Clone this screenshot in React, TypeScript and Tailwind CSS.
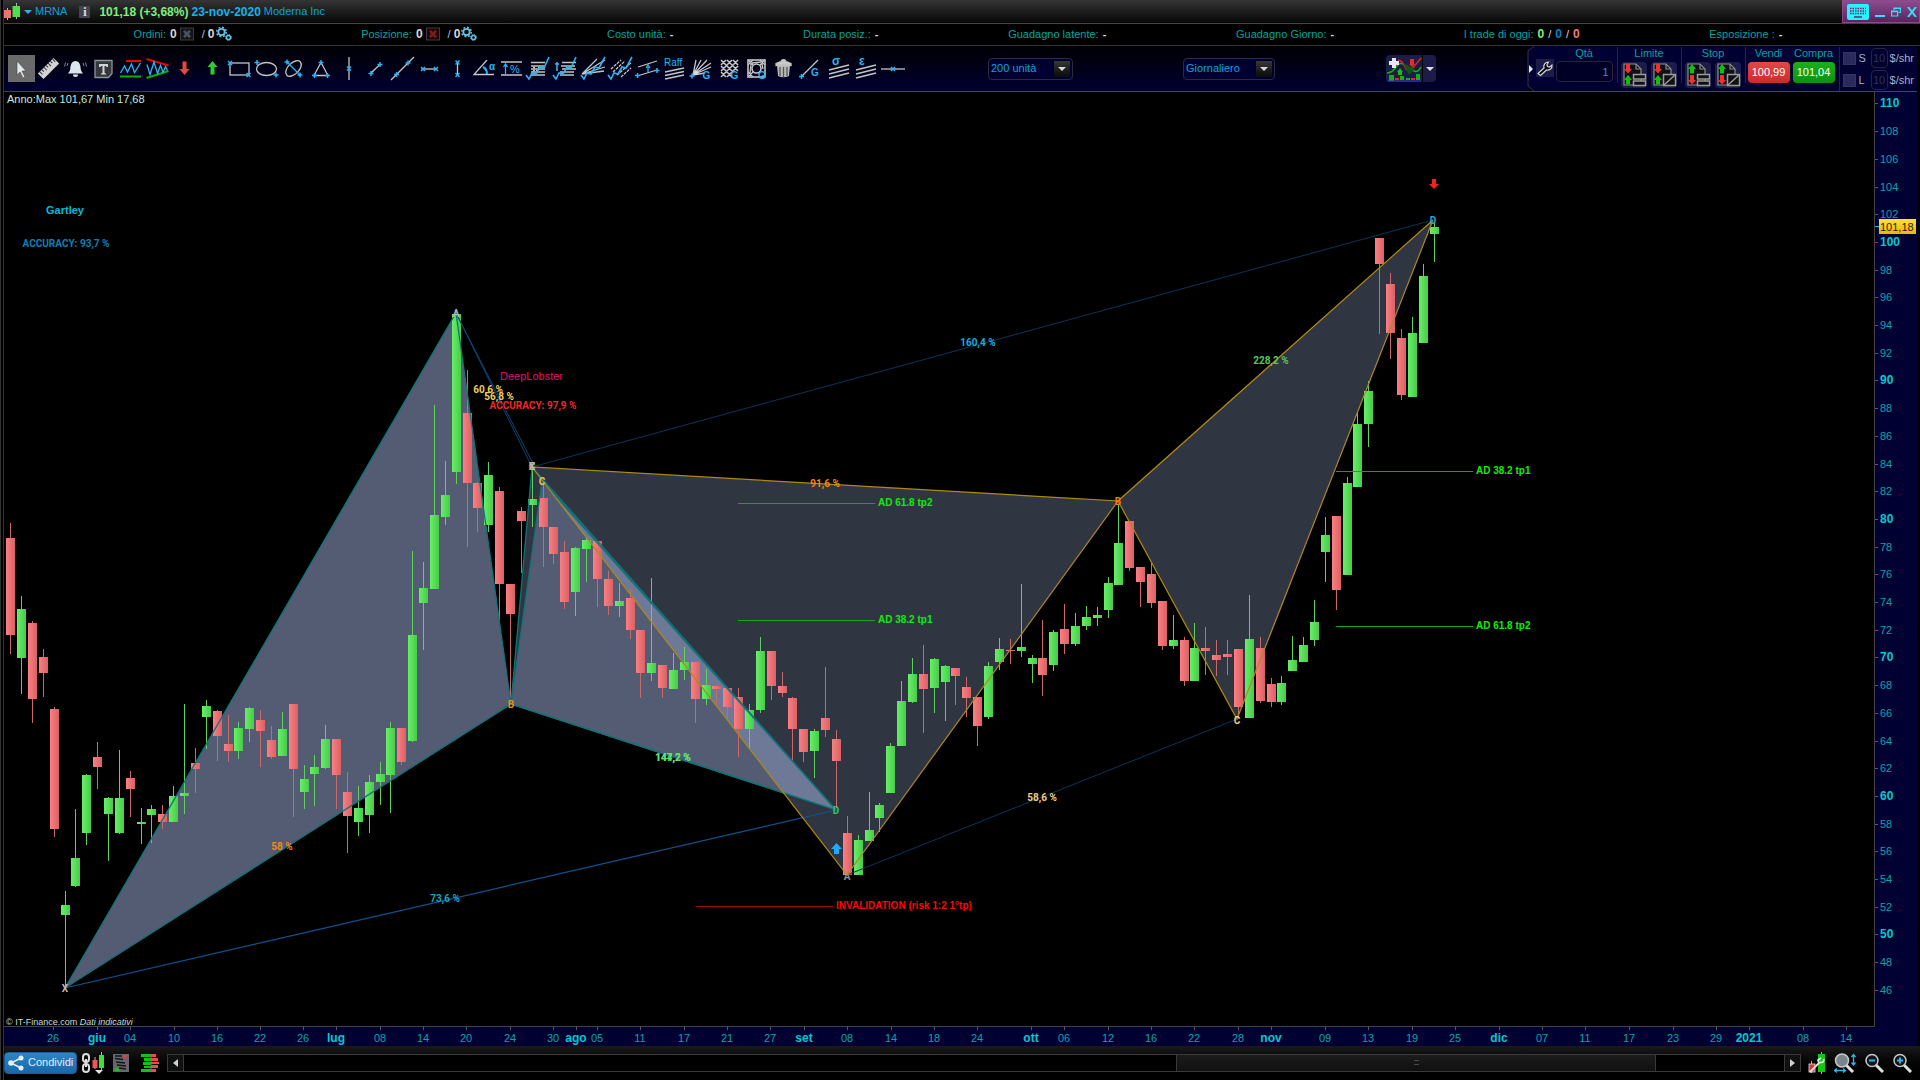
import React from "react";

type Candle = [number, number, number, number, number];

// high, body top, body bottom, low, 1 = up / 0 = down
const candles: Candle[] = [
  [523, 538, 635, 654, 0], [596, 609, 658, 694, 1], [621, 623, 699, 723, 0], [649, 657, 673, 697, 0],
  [707, 709, 829, 837, 0], [891, 905, 915, 987, 1], [809, 858, 886, 887, 1], [774, 775, 833, 845, 1],
  [742, 757, 767, 789, 0], [797, 798, 814, 861, 1], [750, 798, 833, 834, 1], [771, 778, 789, 817, 0],
  [808, 822, 824, 844, 1], [805, 809, 815, 843, 1], [805, 814, 822, 829, 0], [786, 796, 822, 822, 1],
  [704, 793, 796, 814, 1], [748, 763, 769, 793, 0], [700, 706, 717, 749, 1], [710, 711, 736, 761, 0],
  [715, 744, 751, 762, 0], [722, 728, 751, 759, 1], [707, 708, 729, 742, 1], [710, 720, 731, 767, 0],
  [726, 740, 757, 759, 0], [712, 729, 756, 756, 1], [704, 704, 769, 817, 0], [765, 779, 792, 809, 1],
  [755, 767, 774, 806, 1], [725, 739, 768, 769, 1], [739, 739, 775, 809, 0], [772, 792, 816, 853, 0],
  [786, 808, 822, 836, 1], [775, 782, 815, 833, 1], [762, 774, 782, 805, 1], [722, 728, 775, 813, 1],
  [728, 728, 762, 765, 0], [551, 635, 741, 742, 1], [562, 588, 603, 650, 1], [405, 515, 589, 589, 1],
  [461, 495, 517, 525, 1], [312, 314, 472, 484, 1], [370, 413, 483, 547, 0], [482, 483, 508, 532, 0],
  [462, 475, 525, 532, 1], [487, 491, 584, 620, 0], [584, 584, 614, 698, 0], [507, 511, 521, 573, 0],
  [468, 499, 505, 527, 1], [483, 498, 527, 567, 0], [527, 527, 554, 564, 0], [541, 552, 602, 609, 0],
  [547, 548, 592, 616, 1], [538, 540, 549, 582, 1], [541, 541, 579, 607, 0], [571, 579, 606, 615, 0],
  [583, 601, 606, 617, 1], [589, 598, 630, 639, 0], [630, 630, 673, 698, 0], [578, 663, 673, 681, 1],
  [665, 665, 688, 698, 0], [653, 670, 689, 689, 1], [647, 662, 670, 680, 1], [662, 662, 699, 723, 0],
  [669, 685, 699, 705, 1], [686, 686, 689, 705, 0], [687, 688, 707, 719, 0], [688, 697, 729, 757, 0],
  [704, 710, 729, 748, 1], [637, 651, 710, 713, 1], [651, 651, 686, 700, 0], [672, 686, 693, 697, 0],
  [697, 698, 729, 761, 0], [729, 729, 752, 762, 0], [729, 731, 751, 778, 1], [667, 718, 730, 737, 0],
  [730, 739, 761, 808, 0], [816, 833, 875, 875, 0], [835, 840, 875, 875, 1], [792, 830, 841, 841, 1],
  [803, 805, 818, 832, 1], [743, 746, 793, 793, 1], [681, 701, 746, 746, 1], [658, 674, 702, 703, 1],
  [645, 674, 689, 733, 0], [658, 659, 688, 713, 1], [665, 666, 682, 721, 1], [668, 668, 676, 705, 0],
  [677, 687, 698, 717, 0], [697, 697, 726, 746, 0], [662, 666, 717, 719, 1], [638, 649, 662, 670, 1],
  [639, 650, 651, 664, 0], [584, 647, 651, 657, 1], [655, 658, 664, 683, 1], [620, 658, 675, 696, 0],
  [630, 632, 665, 671, 1], [604, 629, 644, 654, 0], [613, 626, 644, 646, 1], [606, 617, 626, 630, 1],
  [607, 615, 618, 626, 1], [577, 583, 610, 618, 1], [505, 543, 585, 585, 1], [521, 521, 568, 571, 0],
  [567, 567, 582, 607, 0], [562, 574, 603, 608, 0], [601, 601, 646, 650, 0], [615, 640, 646, 649, 1],
  [637, 640, 681, 686, 0], [623, 648, 681, 681, 1], [627, 648, 651, 675, 0], [640, 655, 660, 676, 0],
  [640, 654, 657, 675, 0], [649, 649, 707, 718, 0], [595, 639, 718, 718, 1], [637, 648, 701, 703, 0],
  [678, 684, 702, 707, 0], [676, 683, 702, 705, 1], [636, 660, 671, 671, 1], [637, 645, 662, 662, 1],
  [600, 622, 640, 646, 1], [517, 535, 552, 582, 1], [516, 516, 590, 610, 0], [477, 483, 575, 575, 1],
  [412, 424, 487, 487, 1], [381, 391, 424, 447, 1], [238, 238, 264, 334, 0], [273, 284, 333, 359, 0],
  [329, 338, 395, 400, 0], [317, 333, 397, 397, 1], [264, 276, 343, 343, 1], [223, 227, 234, 262, 1],
];

const days: [number, string][] = [
  [53, "26"], [97, "giu"], [130, "04"], [174, "10"], [217, "16"], [260, "22"], [303, "26"], [336, "lug"],
  [380, "08"], [423, "14"], [466, "20"], [510, "24"], [553, "30"], [576, "ago"], [597, "05"], [640, "11"],
  [684, "17"], [727, "21"], [770, "27"], [804, "set"], [847, "08"], [891, "14"], [934, "18"], [977, "24"],
  [1031, "ott"], [1064, "06"], [1108, "12"], [1151, "16"], [1194, "22"], [1238, "28"], [1271, "nov"],
  [1325, "09"], [1368, "13"], [1412, "19"], [1455, "25"], [1499, "dic"], [1542, "07"], [1585, "11"],
  [1629, "17"], [1673, "23"], [1716, "29"], [1749, "2021"], [1803, "08"], [1846, "14"],
];

const prices = Array.from({ length: 33 }, (_, i) => 110 - i * 2);

const priceY = (p: number) => Math.round(103.4 + (110 - p) * 13.85);

const CY = "#2bb5ee";
const GR = "#c4c4c4";

// small x / + handles used by the drawing tools
const Cross = ({ x, y }: { x: number; y: number }) => (
  <path d={`M${x - 2} ${y - 2}l4 4m0-4l-4 4`} stroke={CY} strokeWidth="1.5" />
);

const Plus = ({ x, y }: { x: number; y: number }) => (
  <path d={`M${x - 2.5} ${y}h5m-2.5-2.5v5`} stroke={CY} strokeWidth="1.5" />
);

const Glyph = ({ x, y, size, children }: { x: number; y: number; size: number; children: string }) => (
  <text x={x} y={y} fontSize={size} fontWeight="700" fill={CY} stroke="none">
    {children}
  </text>
);

const tools: { name: string; icon: React.ReactNode }[] = [
  {
    name: "Selezione",
    icon: <path d="M9 6v14l3-3 3 6 2-1-3-6h4z" fill="#e4e8ea" stroke="#444" strokeWidth=".6" />,
  },
  {
    name: "Righello",
    icon: (
      <g transform="rotate(-45 13.5 13.5)">
        <rect x="2.5" y="9.5" width="22" height="8" fill="#d4d4d4" stroke="none" />
        <path d="M5 9.5v4M8 9.5v3M11 9.5v4M14 9.5v3M17 9.5v4M20 9.5v3M23 9.5v4" stroke="#333" strokeWidth="1" />
      </g>
    ),
  },
  {
    name: "Allarme",
    icon: (
      <>
        <path d="M13.5 6c-4 0-5 4-5.2 8-.2 2-1.5 3-2.3 4.5h15c-.8-1.5-2.1-2.5-2.3-4.5-.2-4-1.2-8-5.2-8z" fill="#dbe5ec" stroke="none" />
        <path d="M11 19.5a2.5 2.5 0 005 0z" fill="#dbe5ec" stroke="none" />
        <path d="M6 8l-1 3M3.5 7.5l-1 4M21 8l1 3M23.5 7.5l1 4" stroke="#9aa" strokeWidth=".8" />
      </>
    ),
  },
  {
    name: "Testo",
    icon: (
      <>
        <path d="M5 5.5h17v13l-3.5 4H5z" fill="#34383a" stroke="#8d9496" />
        <path d="M9 9h9v3h-1.5l-.5-1h-1.5v7l1.5.5v1h-5v-1l1.5-.5v-7H11l-.5 1H9z" fill="#d4d4d4" stroke="none" />
      </>
    ),
  },
  {
    name: "Canale orizzontale",
    icon: (
      <>
        <path d="M9 6h15" stroke="#f00000" strokeWidth="2" />
        <path d="M3 21.5h21" stroke="#00b400" strokeWidth="2" />
        <path d="M3.5 18l4-7 3 6 4-8 3 8.5L23.5 8" stroke={CY} />
      </>
    ),
  },
  {
    name: "Triangolo trend",
    icon: (
      <>
        <path d="M2.5 4l22 6.5" stroke="#f00000" strokeWidth="2" />
        <path d="M2.5 23l22-7" stroke="#00b400" strokeWidth="2" />
        <path d="M3 9.5l3 10L10 7l3.5 11.5 3-8 2.5 7 2.5-6 2 4" stroke={CY} />
      </>
    ),
  },
  {
    name: "Freccia giù",
    icon: <path d="M11.5 6.5h4V14h3l-5 6-5-6h3z" fill="#f04438" stroke="none" />,
  },
  {
    name: "Freccia su",
    icon: <path d="M11.5 19.5h4V12h3l-5-6-5 6h3z" fill="#2fce2f" stroke="none" />,
  },
  {
    name: "Rettangolo",
    icon: (
      <>
        <rect x="4" y="8" width="19" height="12" />
        <Cross x={4} y={8} />
        <Cross x={22.5} y={20} />
      </>
    ),
  },
  {
    name: "Ellisse",
    icon: (
      <>
        <ellipse cx="13.5" cy="14" rx="10" ry="6.5" />
        <Plus x={4} y={7.5} />
        <Plus x={23} y={20} />
      </>
    ),
  },
  {
    name: "Ellisse obliqua",
    icon: (
      <>
        <ellipse cx="13.5" cy="13.5" rx="9.5" ry="5.5" transform="rotate(-45 13.5 13.5)" />
        <path d="M7 7l13 13" stroke={CY} />
        <Plus x={7} y={7} />
        <Plus x={20} y={20} />
      </>
    ),
  },
  {
    name: "Triangolo",
    icon: (
      <>
        <path d="M14 7.5l7 13H7z" />
        <Plus x={14} y={7.5} />
        <Plus x={7.5} y={20.5} />
        <Plus x={20.5} y={20.5} />
      </>
    ),
  },
  {
    name: "Linea verticale",
    icon: (
      <>
        <path d="M14 2v23" />
        <Cross x={14} y={13.5} />
      </>
    ),
  },
  {
    name: "Segmento",
    icon: (
      <>
        <path d="M9 18l9-8.5" />
        <Plus x={9} y={18.5} />
        <Plus x={18} y={9.5} />
      </>
    ),
  },
  {
    name: "Retta",
    icon: (
      <>
        <path d="M2 25L25 2" />
        <Plus x={7.5} y={19.5} />
        <Plus x={19} y={8} />
      </>
    ),
  },
  {
    name: "Segmento orizzontale",
    icon: (
      <>
        <path d="M5.5 14h15" />
        <Cross x={7} y={14} />
        <Cross x={20} y={14} />
      </>
    ),
  },
  {
    name: "Segmento verticale",
    icon: (
      <>
        <path d="M13.5 7v14" />
        <Cross x={13.5} y={7.5} />
        <Cross x={13.5} y={20} />
      </>
    ),
  },
  {
    name: "Angolo",
    icon: (
      <>
        <path d="M16 5L3 19.5h20" />
        <path d="M12 12q4 2 4 7" stroke={CY} strokeWidth="2" />
        <Glyph x={18} y={15} size={10}>α</Glyph>
      </>
    ),
  },
  {
    name: "Variazione %",
    icon: (
      <>
        <path d="M3 7h21M3 20h21" />
        <path d="M7.5 19V10M5.5 12l2-3 2 3" stroke={CY} />
        <text x="12" y="18" fontSize="11" fill={CY} stroke="none">%</text>
      </>
    ),
  },
  {
    name: "Ritracciamenti",
    icon: (
      <>
        <path d="M6 7.5h14M6 11h14M6 14h14M6 17h14M6 20h14" />
        <path d="M8 12.5h3m2 0h3M8 15.5h6" strokeDasharray="2 1" />
        <path d="M1 20l3 4 3-6 4 1 4-7 4 1 5-11" stroke={CY} strokeWidth="1.6" />
      </>
    ),
  },
  {
    name: "Estensioni",
    icon: (
      <>
        <path d="M10 7.5h14M9 11h14M10 14h14M8 17h14M8 20h14" />
        <path d="M1 20l3 4 3-6 4 1 4-7 4 1 5-11M5 16V7M3 9h4" stroke={CY} strokeWidth="1.6" />
      </>
    ),
  },
  {
    name: "Ventaglio",
    icon: (
      <>
        <path d="M2 19L17 4M2 19l23-14M2 19l23-7M2 19l22-3" />
        <path d="M1 20l3 4 3-6 4 1 4-7 4 1 6-11" stroke={CY} strokeWidth="1.6" />
      </>
    ),
  },
  {
    name: "Canali",
    icon: (
      <>
        <path d="M4 14L14 5M6 17L18 6M10 20L24 8M14 22l10-9" strokeDasharray="3 1" />
        <path d="M1 20l3 4 3-6 4 1 4-7 4 1 6-11" stroke={CY} strokeWidth="1.6" />
      </>
    ),
  },
  {
    name: "Canale",
    icon: (
      <>
        <path d="M4 12l19-6M3 21l20-6" />
        <path d="M14 17v-5M12 13l2-3 2 3" stroke={CY} />
        <Plus x={3.5} y={20.5} />
        <Plus x={23} y={15.5} />
      </>
    ),
  },
  {
    name: "Raff",
    icon: (
      <>
        <text x="3" y="11" fontSize="10" fill={CY} stroke="none">Raff</text>
        <path d="M4 17l19-4M4 20.5l19-4M4 24l19-4" strokeWidth="1.5" />
      </>
    ),
  },
  {
    name: "Ventaglio di Gann",
    icon: (
      <>
        <path d="M5 20L8 5M5 20l8-15M5 20L19 5M5 20l18-12M5 20l18-8M5 20l12-2" />
        <circle cx="8" cy="18" r="2" fill="#ddd" stroke="none" />
        <Plus x={4} y={21} />
        <Glyph x={14.5} y={24} size={10}>G</Glyph>
      </>
    ),
  },
  {
    name: "Griglia di Gann",
    icon: (
      <>
        <path d="M5 10l5-5M5 16L16 5M5 22L22 5M11 22L22 11M5 17l5 5M5 11l11 11M5 5l12 12M11 5l11 11M17 5l5 5" strokeWidth="1.5" />
        <Glyph x={14.5} y={24} size={10}>G</Glyph>
      </>
    ),
  },
  {
    name: "Quadrato di Gann",
    icon: (
      <>
        <rect x="5" y="5" width="17" height="17" strokeWidth="1.6" />
        <circle cx="13.5" cy="13.5" r="4.5" strokeWidth="1.6" />
        <path d="M5 5l5 5M22 5l-5 5M5 22l5-5M5 10l5-5M17 5l5 5M5 17l5 5M9 8l9-1M8 9l-1 9M19 9l1 5" />
        <Glyph x={15} y={24} size={10}>G</Glyph>
      </>
    ),
  },
  {
    name: "Elimina",
    icon: (
      <>
        <path d="M7 10h13l-1 11q-5.5 2.5-11 0z" fill="#b9b9b9" stroke="none" />
        <path d="M10 12v9M13.5 12v10M17 12v9" stroke="#555" />
        <path d="M6 8.5q7.5-4 15 0v2q-7.5-2-15 0zM11 6q2.5-2.5 5 0" fill="#ccc" />
      </>
    ),
  },
  {
    name: "Linea di Gann",
    icon: (
      <>
        <path d="M4 22L21 5" />
        <Plus x={4.5} y={21.5} />
        <Glyph x={14} y={21} size={10}>G</Glyph>
      </>
    ),
  },
  {
    name: "Deviazione standard",
    icon: (
      <>
        <path d="M4 15l20-5M4 19l20-5M4 23l20-5" strokeWidth="1.5" />
        <Glyph x={7} y={10} size={12}>σ</Glyph>
      </>
    ),
  },
  {
    name: "Errore standard",
    icon: (
      <>
        <path d="M4 15l20-5M4 19l20-5M4 23l20-5" strokeWidth="1.5" />
        <Glyph x={7} y={10} size={12}>ε</Glyph>
      </>
    ),
  },
  {
    name: "Linea orizzontale",
    icon: (
      <>
        <path d="M2 14h24" />
        <Cross x={14} y={14} />
      </>
    ),
  },
];

const Caret = ({ className }: { className: string }) => (
  <svg className={className} viewBox="0 0 8 4">
    <path d="M0 0h8L4 4z" fill="currentColor" />
  </svg>
);

const Gears = () => (
  <svg className="w-4 h-4" viewBox="0 0 16 16" fill="none" stroke="#62c6ee">
    <circle cx="5.5" cy="6" r="3.2" strokeWidth="1.8" />
    <circle cx="5.5" cy="6" r="4.8" strokeWidth="1.4" strokeDasharray="1.9 1.87" />
    <circle cx="12.5" cy="11.5" r="2" strokeWidth="1.4" />
    <circle cx="12.5" cy="11.5" r="3" strokeWidth="1" strokeDasharray="1.2 1.15" />
  </svg>
);

const CloseAll = ({ red }: { red?: boolean }) => (
  <svg className="w-[14px] h-[14px]" viewBox="0 0 14 14">
    <rect x=".5" y="1" width="13" height="12" fill={red ? "#200608" : "#12161a"} stroke="#3a3a3a" />
    <path d="M3 4.5l2-1.5 2 2 2-2 2 1.5L9 7l2 2.5L9 11 7 9l-2 2-2-1.5L5 7z" fill={red ? "#7c1a22" : "#48525c"} />
  </svg>
);

const Stat = ({ label, children }: { label: string; children: React.ReactNode }) => (
  <div className="flex items-center gap-1 whitespace-nowrap">
    <span className="text-[#00a3a0]">{label}</span>
    {children}
  </div>
);

const Counter = ({ label, red }: { label: string; red?: boolean }) => (
  <Stat label={label}>
    <b className="text-xs text-[#d8d8d8]">0</b>
    <button aria-label={`Chiudi ${label}`} className="-ml-px">
      <CloseAll red={red} />
    </button>
    <span className="ml-1 text-[#c0c0c0]">
      / <b className="text-xs text-[#d8d8d8]">0</b>
    </span>
    <button aria-label={`Impostazioni ${label}`} className="-ml-[3px]">
      <Gears />
    </button>
  </Stat>
);

const Header = () => {
  return (
    <header className="flex h-6 shrink-0 items-center border-b border-[#444] bg-linear-to-b from-[#353535] to-[#080808]">
      <svg className="h-[18px] w-4" viewBox="0 0 16 18">
        <path d="M3.5 5v12M12.5 0v16" stroke="#b8b8b8" />
        <rect x="0" y="7" width="7" height="8" fill="#f47074" />
        <rect x="8.5" y="3" width="8" height="11" fill="#4ee04e" />
      </svg>
      <button className="flex items-center gap-[3px] pl-1 text-[#0aa2dc]">
        <Caret className="w-2 h-1 text-[#29b6f0]" />
        MRNA
      </button>
      <button aria-label="Informazioni" className="ml-3 flex h-3 w-[11px] items-center justify-center bg-[#44444e] font-['Liberation_Serif'] text-xs font-bold text-[#e0e0e0]">
        i
      </button>
      <span className="ml-[9px] text-xs font-bold text-[#7df07d]">101,18 (+3,68%)</span>
      <span className="ml-[3px] text-xs font-bold text-[#12b4ea]">23-nov-2020</span>
      <span className="ml-[3px] text-[#0aa2dc]">Moderna Inc</span>
      <div className="ml-auto flex h-full w-[78px] items-center gap-[6px] border border-[#8a4a8c] bg-linear-to-b from-[#8c4c8e] to-[#5a2560] pl-1">
        <button aria-label="Tastiera">
          <svg className="w-[22px] h-4" viewBox="0 0 22 16">
            <rect y="0" width="22" height="16" rx="2" fill="#2bf0ff" />
            <path d="M3 4.5h16M3 7h16M3 9.5h16" stroke="#5b3068" strokeWidth="1.5" strokeDasharray="1.5 1" />
            <path d="M7 13h8" stroke="#5b3068" strokeWidth="1.5" />
          </svg>
        </button>
        <button aria-label="Riduci">
          <svg className="w-[10px] h-3" viewBox="0 0 10 12">
            <path d="M0 10h10" stroke="#40dcf4" strokeWidth="2" />
          </svg>
        </button>
        <button aria-label="Ripristina">
          <svg className="w-[10px] h-[10px]" viewBox="0 0 10 10" fill="none" stroke="#40dcf4" strokeWidth="1.2">
            <path d="M3 3V1h6.4v4.5H7.5M3 1.4h6" />
            <path d="M.6 4h6v5h-6zM.6 4.7h6" />
          </svg>
        </button>
        <button aria-label="Chiudi">
          <svg className="w-[10px] h-[10px]" viewBox="0 0 10 10">
            <path d="M1 0l8 10M9 0L1 10" stroke="#40dcf4" strokeWidth="2" />
          </svg>
        </button>
      </div>
    </header>
  );
};

const StatusRow = () => {
  return (
    <div className="flex h-[22px] shrink-0 items-center justify-evenly border-b border-[#333] pr-2 pb-px">
      <Counter label="Ordini:" />
      <Counter label="Posizione:" red />
      <Stat label="Costo unità:"><b>-</b></Stat>
      <Stat label="Durata posiz.:"><b>-</b></Stat>
      <Stat label="Guadagno latente:"><b>-</b></Stat>
      <Stat label="Guadagno Giorno:"><b>-</b></Stat>
      <Stat label="I trade di oggi:">
        <b className="text-xs text-[#7df07d]">0</b>/<b className="text-xs text-[#0a80c8]">0</b>/
        <b className="text-xs text-[#f47a7e]">0</b>
      </Stat>
      <Stat label="Esposizione :"><b>-</b></Stat>
    </div>
  );
};

const Dropdown = ({ label, value, className }: { label: string; value: string; className: string }) => (
  <div className={`relative h-[22px] shrink-0 ${className}`}>
    <select
      aria-label={label}
      className="h-full w-full appearance-none rounded-sm border border-[#2c2c3c] bg-[#000030] pl-[2px] text-[#0aa2dc] outline-none"
    >
      <option>{value}</option>
    </select>
    <span className="pointer-events-none absolute top-[3px] right-[3px] flex h-4 w-4 items-center justify-center bg-linear-to-b from-[#383838] to-[#0a0a0a]">
      <Caret className="w-2 h-1 text-[#d8d8d8]" />
    </span>
  </div>
);

const OrderIcon = ({ top, bottom, slash }: { top: "red" | "green"; bottom: "red" | "green"; slash?: boolean }) => {
  const color = { red: "#f23030", green: "#10c010" };
  return (
    <svg className="w-[26px] h-[26px]" viewBox="0 0 26 26">
      <path d="M3 2h12l5 5v16H3z" fill="#101018" stroke="#8d8d8d" strokeWidth="1.2" />
      <path d="M15 2v5h5" fill="none" stroke="#8d8d8d" strokeWidth="1.2" />
      <path d={top === "red" ? "M5 2h4v5h2l-4 4.500-4-4.500h2z" : "M5 11.500h4V7h2L7 2 3 7h2z"} fill={color[top]} />
      <path d={bottom === "red" ? "M5 13h4v5h2l-4 4.500-4-4.500h2z" : "M5 22.500h4V18h2l-4-5-4 5h2z"} fill={color[bottom]} />
      {slash ? (
        <>
          <rect x="12.5" y="12.5" width="12" height="11" fill="#111" stroke="#9a9a9a" strokeWidth="1.5" />
          <path d="M13 23l11-10" stroke="#9a9a9a" strokeWidth="1.5" />
        </>
      ) : (
        <>
          <rect x="12.5" y="12.5" width="12" height="4.5" fill="#111" stroke="#9a9a9a" strokeWidth="1.5" />
          <rect x="12.5" y="19" width="12" height="4.5" fill="#111" stroke="#9a9a9a" strokeWidth="1.5" />
        </>
      )}
    </svg>
  );
};

const OrderGroup = ({ title, top, bottom }: { title: string; top: "red" | "green"; bottom: "red" | "green" }) => (
  <div className="flex h-9 w-16 flex-col items-center border-l border-[#26263a]">
    <span className="-mt-[2px] leading-4 text-[#00a3a0]">{title}</span>
    <div className="mt-px flex gap-1">
      <button aria-label={`${title} standard`} className="rounded-sm bg-[#1c1c48]">
        <OrderIcon top={top} bottom={bottom} />
      </button>
      <button aria-label={`${title} condizionale`} className="rounded-sm bg-[#1c1c48]">
        <OrderIcon top={top} bottom={bottom} slash />
      </button>
    </div>
  </div>
);

const LimitRow = ({ id, label }: { id: string; label: string }) => (
  <div className="flex h-[22px] items-center text-[#a9b0c4]">
    <input
      id={`${id}-on`}
      type="checkbox"
      className="h-[13px] w-[13px] appearance-none border border-[#34346a] bg-[#2a2a5c]"
    />
    <label htmlFor={`${id}-on`} className="w-[15px] pl-[3px]">
      {label}
    </label>
    <input
      aria-label={`${label} $/shr`}
      defaultValue="10"
      className="h-5 w-[17px] rounded-sm border border-[#26263a] bg-transparent text-center text-[#34344e] outline-none"
    />
    <span className="pl-[2px]">$/shr</span>
  </div>
);

const TradePanel = () => {
  return (
    <div className="ml-auto flex h-full shrink-0 items-start bg-[#000033] pt-px pr-[3px]">
      <svg className="-mt-px h-[45px] w-2" viewBox="0 0 8 45">
        <path d="M0 0h8L1 5v35l7 5H0z" fill="#000012" />
        <path d="M7 0L1 5v35l6 5" fill="none" stroke="#34344a" />
        <path d="M2 19l4 4-4 4z" fill="#e8e8e8" />
      </svg>
      <button aria-label="Impostazioni trading" className="mt-3 ml-px h-[18px] w-[18px] bg-[#1c1c48]">
        <svg viewBox="0 0 18 18">
          <path
            d="M2 14.5l6-5.5c-.8-3 1-6 4.5-6L11 5.5l.5 2 2 .5L16 6c.5 3.5-2.5 5.6-5.5 5l-6 5.5z"
            fill="#050510"
            stroke="#d4d4d4"
            strokeWidth="1.2"
          />
        </svg>
      </button>
      <div className="ml-[2px] flex flex-col items-center">
        <label htmlFor="qty" className="-mt-[2px] leading-4 text-[#00a3a0]">
          Qtà
        </label>
        <input
          id="qty"
          defaultValue="1"
          className="h-[21px] w-[57px] rounded-sm border border-[#26263a] bg-[#000026] pr-[3px] text-right text-[#0aa2dc] outline-none"
        />
      </div>
      <div className="ml-1 flex">
        <OrderGroup title="Limite" top="red" bottom="green" />
        <OrderGroup title="Stop" top="green" bottom="red" />
      </div>
      <div className="flex h-9 gap-[3px] border-l border-[#26263a] pl-[2px]">
        <div className="flex flex-col items-center">
          <span className="-mt-[2px] leading-4 text-[#00a3a0]">Vendi</span>
          <button className="mt-px h-[22px] w-[42px] rounded-sm bg-linear-to-b from-[#e04848] to-[#cc2a2a] text-white">
            100,99
          </button>
        </div>
        <div className="flex flex-col items-center">
          <span className="-mt-[2px] leading-4 text-[#00a3a0]">Compra</span>
          <button className="mt-px h-[22px] w-[42px] rounded-sm bg-linear-to-b from-[#1cae1c] to-[#0c930c] text-white">
            101,04
          </button>
        </div>
      </div>
      <div className="ml-1 border-l border-[#26263a] pl-[3px]">
        <LimitRow id="stop" label="S" />
        <LimitRow id="limit" label="L" />
      </div>
    </div>
  );
};

const Toolbar = () => {
  return (
    <div className="mr-[3px] flex h-[46px] shrink-0 items-center border-b border-[#444] bg-linear-to-b from-[#000004] to-[#000033]">
      <div className="ml-1 flex w-[898px] shrink-0 justify-between">
        {tools.map((t, i) => (
          <button key={t.name} aria-label={t.name} className={i === 0 ? "h-[27px] w-[27px] bg-[#6a6a6a]" : "h-[27px] w-[27px]"}>
            <svg viewBox="0 0 27 27" fill="none" stroke={GR} strokeWidth="1.3">
              {t.icon}
            </svg>
          </button>
        ))}
      </div>
      <Dropdown label="Unità" value="200 unità" className="ml-[82px] w-[85px]" />
      <Dropdown label="Periodo" value="Giornaliero" className="ml-[110px] w-[92px]" />
      <div className="ml-[111px] flex h-[27px] shrink-0">
        <button aria-label="Indicatori" className="w-9 rounded-l-sm bg-[#1c1c48]">
          <svg viewBox="0 0 36 27">
            <path d="M1 18q5 0 9-6t9-2 9 6 7-4" fill="none" stroke="#12b012" strokeWidth="1.5" />
            <path d="M12 5q4 0 7 7t7 2 9-11" fill="none" stroke="#d22" strokeWidth="1.5" />
            <path d="M17 8l6 12 6-6z" fill="#0a5a0a" />
            <path d="M6 3h4v3h3v4h-3v3H6v-3H3V6h3z" fill="#e6e6f4" />
            <path d="M24 4h4v5h1l-3 3-3-3h1z" fill="#f02828" />
            <path d="M12 20h4v-3h1l-3-4-3 4h1z" fill="#10c010" />
            <path d="M3 20h5v6H3zM14 21h4v4h-4zM30 19h4v6h-4zM20 23h4v2h-4z" fill="#12b012" />
            <path d="M9 23h4v2H9zM25 23h4v2h-4z" fill="#e22" />
            <path d="M1 26h34" stroke="#3030e0" />
          </svg>
        </button>
        <button aria-label="Altri indicatori" className="flex w-[14px] items-center justify-center rounded-r-sm border-l border-black bg-[#1c1c48]">
          <Caret className="w-2 h-1 text-[#e0e0e0]" />
        </button>
      </div>
      <TradePanel />
    </div>
  );
};

const marks: { x: number; y: number; text: string; fill: string }[] = [
  { x: 66, y: 247, text: "ACCURACY: 93,7 %", fill: "#0a80b8" },
  { x: 282, y: 850, text: "58 %", fill: "#f08a10" },
  { x: 445, y: 902, text: "73,6 %", fill: "#10a8c8" },
  { x: 488, y: 393, text: "60,6 %", fill: "#f0cc60" },
  { x: 499, y: 400, text: "56,8 %", fill: "#f0cc60" },
  { x: 533, y: 409, text: "ACCURACY: 97,9 %", fill: "#f02828" },
  { x: 825, y: 487, text: "91,6 %", fill: "#f08a10" },
  { x: 673, y: 761, text: "144,2 %", fill: "#60e070" },
  { x: 673, y: 761, text: "147,2 %", fill: "#60e070" },
  { x: 978, y: 346, text: "160,4 %", fill: "#10b0e0" },
  { x: 1271, y: 364, text: "228,2 %", fill: "#50c860" },
  { x: 1042, y: 801, text: "58,6 %", fill: "#f0cc80" },
  { x: 65, y: 992, text: "X", fill: "#b8b8b8" },
  { x: 456, y: 317, text: "A", fill: "#b8b8b8" },
  { x: 511, y: 708, text: "B", fill: "#f08a10" },
  { x: 532, y: 470, text: "X", fill: "#b8b8b8" },
  { x: 532, y: 470, text: "C", fill: "#c8b890" },
  { x: 542, y: 485, text: "C", fill: "#e8c060" },
  { x: 836, y: 814, text: "D", fill: "#40c060" },
  { x: 847, y: 880, text: "A", fill: "#909090" },
  { x: 1118, y: 505, text: "B", fill: "#f07a10" },
  { x: 1237, y: 724, text: "C", fill: "#f0cc80" },
  { x: 1433, y: 224, text: "D", fill: "#10b0d8" },
];

const targets: [number, number, string][] = [
  [738, 503, "AD 61.8 tp2"],
  [738, 620, "AD 38.2 tp1"],
  [1336, 471, "AD 38.2 tp1"],
  [1336, 626, "AD 61.8 tp2"],
];

const Chart = () => {
  return (
    <svg
      className="mr-[3px] block min-h-0 flex-1 font-['Liberation_Sans',Arial,sans-serif]"
      viewBox="4 92 1913 954"
      preserveAspectRatio="xMinYMin meet"
      role="img"
      aria-label="Moderna Inc, grafico giornaliero"
    >
      <defs>
        <linearGradient id="up">
          <stop offset="0" stopColor="#68ee68" />
          <stop offset="1" stopColor="#46cc46" />
        </linearGradient>
        <linearGradient id="down">
          <stop offset="0" stopColor="#fa8084" />
          <stop offset="1" stopColor="#dc6064" />
        </linearGradient>
        <linearGradient id="tag" x2="0" y2="1">
          <stop offset="0" stopColor="#ffe03c" />
          <stop offset="1" stopColor="#f4b400" />
        </linearGradient>
      </defs>

      {/* axes */}
      <path d="M1875 92h42v954H4v-19h1871z" fill="#000033" />
      <path d="M4 1026.5h1870.5V92" fill="none" stroke="#444" />
      {prices.map((p) => (
        <g key={p}>
          <path d={`M1875 ${priceY(p) + 0.5}h3`} stroke="#5a5a5a" />
          <text
            x="1880"
            y={priceY(p) + 4}
            fontSize={p % 10 ? 11 : 12}
            fontWeight={p % 10 ? 400 : 700}
            fill={p % 10 ? "#00a8a8" : "#00c8d0"}
          >
            {p}
          </text>
        </g>
      ))}
      <rect x="1879" y="219" width="37" height="15" fill="url(#tag)" />
      <path d="M1875 226.5h4" stroke="#00c8d0" />
      <text x="1880" y="231" fontSize="11" fill="#222">101,18</text>
      {days.map(([x, d]) => (
        <g key={x}>
          <path d={`M${x + 0.5} 1027v3`} stroke="#5a5a5a" />
          <text
            x={x}
            y="1042"
            textAnchor="middle"
            fontSize={/^\d\d$/.test(d) ? 11 : 12}
            fontWeight={/^\d\d$/.test(d) ? 400 : 700}
            fill={/^\d\d$/.test(d) ? "#00a8a8" : "#00c8d0"}
          >
            {d}
          </text>
        </g>
      ))}

      {/* harmonic patterns */}
      <g fill="#b8ccff" fillOpacity=".26">
        <path d="M65 988L456 313 511 704zM511 704L542 481 836 810z" />
        <path d="M65 988L456 313 511 704zM511 704L532 467 836 810z" />
        <path d="M532 467L847 875 1118 501zM1118 501L1237 719 1433 220z" />
      </g>

      {candles.map(([high, top, bottom, low, up], i) => {
        const x = Math.round(10.7 + i * 10.865 - 0.5);
        return (
          <g key={i}>
            <path d={`M${x + 0.5} ${high}V${low}`} stroke={up ? "#5ed05e" : "#c86a6c"} />
            <rect x={x - 4} y={top} width="9" height={bottom - top} fill={up ? "url(#up)" : "url(#down)"} />
          </g>
        );
      })}

      <g fill="none" stroke="#0e5490">
        <path d="M65 988L836 810" strokeWidth="1.2" />
        <path d="M456 313L532 467M456 313L542 481" stroke="#0a4678" />
        <path d="M532 467L1433 220M847 875L1237 719" stroke="#063658" />
      </g>
      <g fill="none" stroke="#0e7478" strokeWidth="1.3">
        <path d="M65 988L456 313 511 704zM511 704L542 481 836 810z" />
        <path d="M511 704L532 467 836 810z" />
      </g>
      <path
        d="M532 467L847 875 1118 501zM1118 501L1237 719 1433 220z"
        fill="none"
        stroke="#b0881a"
        strokeWidth="1.2"
      />

      {targets.map(([x, y, label]) => (
        <g key={`${x}-${y}`}>
          <path d={`M${x} ${y + 0.5}h137`} stroke="#12a812" />
          <text x={x + 140} y={y + 3} fontSize="10" fontWeight="700" fill="#0cec0c">
            {label}
          </text>
        </g>
      ))}
      <path d="M696 906.5h137" stroke="#a80808" />
      <text x="836" y="909" fontSize="10" fontWeight="700" fill="#f80808">
        INVALIDATION (risk 1:2 1°tp)
      </text>
      <text x="65" y="214" textAnchor="middle" fontSize="11" fontWeight="700" fill="#00bcd8">
        Gartley
      </text>
      <text x="500" y="380" fontSize="11" fill="#e01070">DeepLobster</text>
      <g className="font-['Roboto',sans-serif] font-bold" fontSize="10" textAnchor="middle">
        {marks.map((m) => (
          <text key={`${m.x}-${m.y}-${m.text}`} x={m.x} y={m.y} fill={m.fill}>
            {m.text}
          </text>
        ))}
      </g>
      <path d="M834 854h5v-5h3l-5.5-6-5.5 6h3z" fill="#22a8f8" />
      <path d="M1432 179h4v5h3l-5 5-5-5h3z" fill="#f42020" />

      <text x="7" y="103" fontSize="11" fill="#c4e8e0">Anno:Max 101,67 Min 17,68</text>
      <text x="6" y="1025" fontSize="9" fill="#c4dcd8">
        © IT-Finance.com <tspan fontStyle="italic">Dati indicativi</tspan>
      </text>
    </svg>
  );
};

const Footer = () => {
  return (
    <footer className="flex h-[34px] shrink-0 items-center bg-linear-to-b from-[#1a1a1a] to-[#000000] pb-px">
      <button className="flex h-[22px] w-[73px] items-center gap-1 rounded-sm border border-[#1c5c94] bg-linear-to-b from-[#2c86c4] to-[#1868a8] pl-[3px] text-[#e4eef8]">
        <svg className="h-4 w-4 shrink-0" viewBox="0 0 16 16">
          <path d="M13 3L3 8l10 5" fill="none" stroke="#e4eef8" strokeWidth="1.5" />
          <circle cx="13" cy="3" r="2.5" fill="#e4eef8" />
          <circle cx="3" cy="8" r="2.8" fill="#e4eef8" />
          <circle cx="13" cy="13" r="2.5" fill="#e4eef8" />
        </svg>
        Condividi
      </button>
      <button aria-label="Collega grafici" className="ml-1">
        <svg className="h-[22px] w-6" viewBox="0 0 24 22">
          <g fill="none" stroke="#dcdcdc" strokeWidth="2">
            <rect x="2" y="2" width="6" height="8" rx="3" />
            <rect x="2" y="12" width="6" height="8" rx="3" />
            <path d="M5 7v8" />
          </g>
          <path d="M14 5v12M20.5 0v18" stroke="#b8b8b8" />
          <rect x="11.5" y="8" width="5" height="8" fill="#f05458" />
          <rect x="18" y="3" width="5" height="13" fill="#40dc40" />
          <path d="M14 18h8l-4 4z" fill="#e4e4e4" />
        </svg>
      </button>
      <button aria-label="Rapporto" className="ml-2">
        <svg className="h-[18px] w-4" viewBox="0 0 16 18">
          <rect width="16" height="18" fill="#66666c" />
          <path d="M2 2h7M2 4.5l8 1M3 8l9 1M4 11l9 1M6 14l7 1" stroke="#16161a" strokeWidth="1.5" />
          <path d="M9 1h6l-3 4z" fill="#f03a3a" />
          <path d="M1 17h6l-3-4z" fill="#18c818" />
        </svg>
      </button>
      <button aria-label="Book ordini" className="ml-3">
        <svg className="h-[18px] w-[18px]" viewBox="0 0 18 18">
          <path d="M0 0h10v3H0zM3 4h7v3H3zM2 8h8v3H2zM3 12h7v2H3zM0 15h10v3H0z" fill="#10c410" />
          <path d="M10 0h5v3h-5zM10 4h7v3h-7zM10 8h8v2h-8zM10 11h7v3h-7zM10 15h5v3h-5z" fill="#f04a4a" />
          <path d="M10 0v18" stroke="#777" />
        </svg>
      </button>
      <div className="ml-2 flex h-[18px] flex-1">
        <button aria-label="Indietro" className="flex w-[17px] items-center justify-center border border-[#3a3a3a] bg-[#101010]">
          <svg className="h-2 w-[5px]" viewBox="0 0 5 8">
            <path d="M5 0v8L0 4z" fill="#d0d0d0" />
          </svg>
        </button>
        <div className="flex flex-1 border-y border-[#3a3a3a] bg-black">
          <div className="w-[62%]" />
          <div className="flex w-[30%] items-center justify-center border-x border-[#3a3a3a] bg-linear-to-b from-[#1c1c1c] to-[#101010]">
            <span className="h-[5px] w-[5px] border-y border-[#484848]" />
          </div>
        </div>
        <button aria-label="Avanti" className="flex w-[17px] items-center justify-center border border-[#3a3a3a] bg-[#101010]">
          <svg className="h-2 w-[5px]" viewBox="0 0 5 8">
            <path d="M0 0v8l5-4z" fill="#d0d0d0" />
          </svg>
        </button>
      </div>
      <div className="flex items-center gap-2 pr-2 pl-[7px]">
        <button aria-label="Stile grafico">
          <svg className="h-[22px] w-[18px]" viewBox="0 0 18 22">
            <path d="M3.5 9v12M13.5 0v22" stroke="#aaa" />
            <rect x="1" y="12" width="6" height="8" fill="#e03434" stroke="#ddd" strokeWidth=".8" />
            <rect x="10" y="2" width="7" height="18" fill="#10c810" />
            <path d="M2 20L11 11l-1-3 3-2M11 11l4-1 1-3" fill="none" stroke="#e4e4e4" strokeWidth="1.8" />
          </svg>
        </button>
        <button aria-label="Adatta zoom">
          <svg className="h-5 w-[22px]" viewBox="0 0 22 20" fill="none">
            <path d="M12 12l7 7" stroke="#e0e0e0" strokeWidth="3" />
            <circle cx="8" cy="7.5" r="6.5" fill="#7a848c" stroke="#c8c8c8" strokeWidth="1.5" />
            <path
              d="M19.5 2v9M17.5 4l2-2.5 2 2.5M17.5 9.5l2 2.5 2-2.5M1 17.5h10M3 15.5l-2.5 2 2.5 2M9 15.5l2.5 2-2.5 2"
              stroke={CY}
              strokeWidth="1.3"
            />
          </svg>
        </button>
        <button aria-label="Riduci zoom">
          <svg className="h-5 w-5" viewBox="0 0 20 20" fill="none">
            <path d="M12 12l7 7" stroke="#e0e0e0" strokeWidth="3" />
            <circle cx="8" cy="7.5" r="6" fill="#10161c" stroke="#c8c8c8" strokeWidth="1.5" />
            <path d="M5 7.5h6" stroke={CY} strokeWidth="2" />
          </svg>
        </button>
        <button aria-label="Aumenta zoom">
          <svg className="h-5 w-5" viewBox="0 0 20 20" fill="none">
            <path d="M12 12l7 7" stroke="#e0e0e0" strokeWidth="3" />
            <circle cx="8" cy="7.5" r="6" fill="#10161c" stroke="#c8c8c8" strokeWidth="1.5" />
            <path d="M5 7.5h6M8 4.5v6" stroke={CY} strokeWidth="2" />
          </svg>
        </button>
      </div>
    </footer>
  );
};

const App = () => {
  return (
    <div className="flex h-screen flex-col overflow-hidden border-l-4 border-double border-[#333] bg-black font-['Liberation_Sans',Arial,sans-serif] text-[11px] text-[#d8d8d8]">
      <Header />
      <StatusRow />
      <Toolbar />
      <Chart />
      <Footer />
    </div>
  );
};

export default App;
